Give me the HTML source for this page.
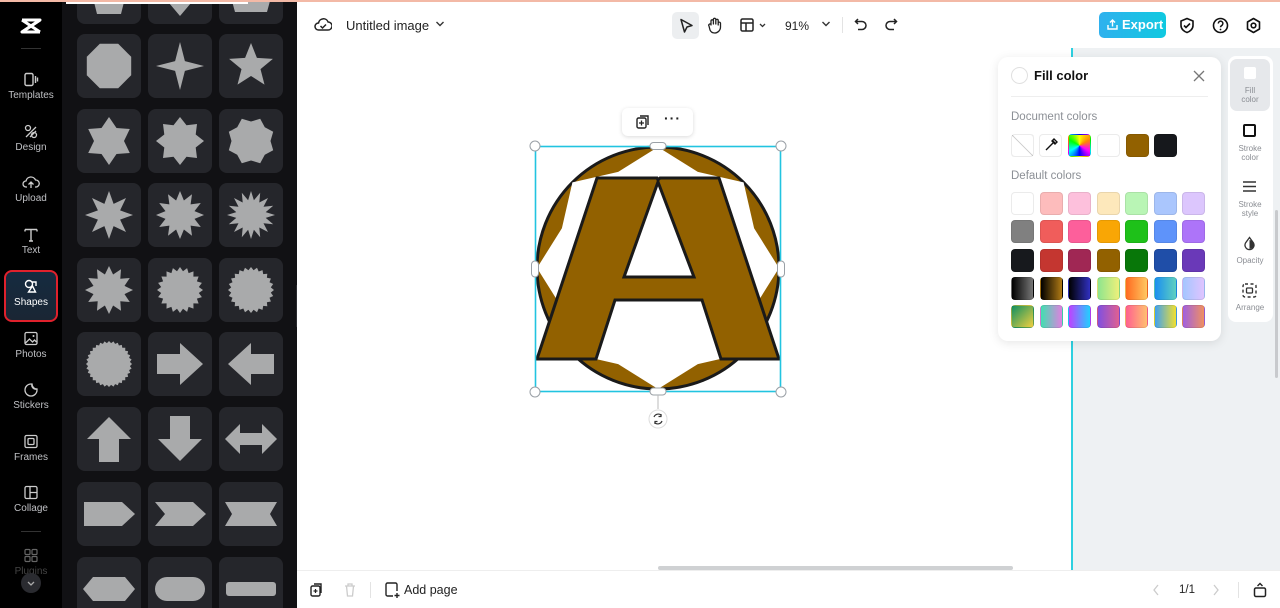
<!DOCTYPE html>
<html style="overflow:hidden;width:1280px;height:608px"><head><meta charset="utf-8">
<style>
*{box-sizing:border-box;margin:0;padding:0}
body{width:1280px;height:608px;overflow:hidden;font-family:"Liberation Sans",sans-serif;background:#fff;position:relative}
.abs{position:absolute}
#side{left:0;top:0;width:62px;height:608px;background:#000}
.si{position:absolute;left:0;width:62px;text-align:center;color:#bfc0c4;font-size:10px}
.si svg{display:block;margin:0 auto 3px}
#panel{left:62px;top:0;width:235px;height:608px;background:#111114;overflow:hidden}
.tile{position:absolute;width:64px;height:64px;background:#25262b;border-radius:8px}
.tile svg{width:64px;height:64px}
.sw{position:absolute;width:23px;height:23px;border-radius:4px;border:1px solid rgba(0,0,0,.08)}
.rt{position:absolute;left:0;width:44px;text-align:center;font-size:8px;color:#8a8d93;line-height:9px}
</style></head><body>

<div id="side" class="abs">
  <svg class="abs" style="left:19px;top:17px" width="24" height="18" viewBox="0 0 24 18"><path d="M3 3h18L3 15h18" fill="none" stroke="#fff" stroke-width="3" stroke-linejoin="round"/><path d="M3 3l18 12M21 3L3 15" stroke="#fff" stroke-width="3"/></svg>
  <div class="abs" style="left:21px;top:48px;width:20px;height:1px;background:#333"></div>
  <div class="si" style="top:72px"><svg width="16" height="15" viewBox="0 0 16 15"><rect x="2" y="1.5" width="8" height="12" rx="1.5" fill="none" stroke="#ccc" stroke-width="1.4"/><path d="M12.5 4v7M14.5 5.5v4" stroke="#ccc" stroke-width="1.4"/></svg>Templates</div>
  <div class="si" style="top:124px"><svg width="16" height="15" viewBox="0 0 16 15"><circle cx="5" cy="4" r="2.5" fill="none" stroke="#ccc" stroke-width="1.3"/><path d="M3 13l10-10M7 13l6-6" stroke="#ccc" stroke-width="1.3"/><circle cx="11" cy="11" r="2.5" fill="none" stroke="#ccc" stroke-width="1.3"/></svg>Design</div>
  <div class="si" style="top:175px"><svg width="18" height="15" viewBox="0 0 18 15"><path d="M5 12H4a3 3 0 010-6 5 5 0 019.5-1A3.5 3.5 0 0114 12h-1M9 13V7M6.5 9.5L9 7l2.5 2.5" fill="none" stroke="#ccc" stroke-width="1.3"/></svg>Upload</div>
  <div class="si" style="top:227px"><svg width="16" height="15" viewBox="0 0 16 15"><path d="M2 2.5h12M8 2.5V14M2 2.5v2M14 2.5v2M6 14h4" fill="none" stroke="#ccc" stroke-width="1.4"/></svg>Text</div>
  <div class="abs" style="left:4px;top:270px;width:54px;height:52px;border:2px solid #e0212c;border-radius:8px;background:linear-gradient(#152b40,#1a2634)"></div>
  <div class="si" style="top:279px;color:#fff"><svg width="16" height="15" viewBox="0 0 16 15"><circle cx="6" cy="5" r="3.5" fill="none" stroke="#fff" stroke-width="1.4"/><path d="M9 3h4v4M9.5 7l3 6h-7z" fill="none" stroke="#fff" stroke-width="1.4"/></svg>Shapes</div>
  <div class="si" style="top:331px"><svg width="16" height="15" viewBox="0 0 16 15"><rect x="2" y="1.5" width="12" height="12" rx="1.5" fill="none" stroke="#ccc" stroke-width="1.3"/><path d="M2.5 12l4-4 3 3 2-2 2 2" fill="none" stroke="#ccc" stroke-width="1.3"/><circle cx="10.5" cy="5" r="1" fill="#ccc"/></svg>Photos</div>
  <div class="si" style="top:382px"><svg width="16" height="15" viewBox="0 0 16 15"><path d="M14 8A6 6 0 118 2h1a5 5 0 005 5z" fill="none" stroke="#ccc" stroke-width="1.3"/><path d="M9 2a4 4 0 005 5" fill="none" stroke="#ccc" stroke-width="1.3"/></svg>Stickers</div>
  <div class="si" style="top:434px"><svg width="16" height="15" viewBox="0 0 16 15"><rect x="2" y="1.5" width="12" height="12" rx="1.5" fill="none" stroke="#ccc" stroke-width="1.3"/><rect x="5" y="4.5" width="6" height="6" rx="1" fill="none" stroke="#ccc" stroke-width="1.3"/></svg>Frames</div>
  <div class="si" style="top:485px"><svg width="16" height="15" viewBox="0 0 16 15"><rect x="2" y="1.5" width="12" height="12" rx="1.5" fill="none" stroke="#ccc" stroke-width="1.3"/><path d="M7 1.5v12M7 7.5h7" stroke="#ccc" stroke-width="1.3"/></svg>Collage</div>
  <div class="abs" style="left:21px;top:531px;width:20px;height:1px;background:#333"></div>
  <div class="si" style="top:548px;color:#444"><svg width="16" height="15" viewBox="0 0 16 15"><g fill="none" stroke="#666" stroke-width="1.2"><rect x="2" y="1.5" width="5" height="5" rx="1"/><rect x="9" y="1.5" width="5" height="5" rx="1"/><rect x="2" y="8.5" width="5" height="5" rx="1"/><rect x="9" y="8.5" width="5" height="5" rx="1"/></g></svg>Plugins</div>
  <div class="abs" style="left:21px;top:573px;width:20px;height:20px;border-radius:50%;background:#2a2b30"><svg width="20" height="20" viewBox="0 0 20 20"><path d="M7 9l3 3 3-3" fill="none" stroke="#aaa" stroke-width="1.3"/></svg></div>
</div>

<div id="panel" class="abs"><div id="tiles" class="abs" style="left:-62px;top:0;width:297px;height:608px"></div></div>
<div class="abs" style="left:66px;top:0;width:182px;height:4px;background:#fff"></div>
<div class="abs" style="left:296px;top:285px;width:6px;height:42px;background:#2a2b30;border-radius:0 6px 6px 0"></div>

<svg class="abs" style="left:314px;top:17px" width="18" height="16" viewBox="0 0 18 16"><path d="M5 13H4.5a3.5 3.5 0 010-7 5 5 0 019.6-1A3.6 3.6 0 0114 13z" fill="none" stroke="#222" stroke-width="1.5"/><path d="M6.5 9l2 2 3.5-3.5" fill="none" stroke="#222" stroke-width="1.5"/></svg>
<div class="abs" style="left:346px;top:18px;font-size:13px;color:#222">Untitled image</div>
<svg class="abs" style="left:435px;top:20px" width="10" height="8" viewBox="0 0 10 8"><path d="M1.5 2l3.5 3.5L8.5 2" fill="none" stroke="#333" stroke-width="1.4"/></svg>
<div class="abs" style="left:672px;top:12px;width:27px;height:27px;background:#eceef0;border-radius:5px"></div>
<svg class="abs" style="left:677px;top:17px" width="18" height="18" viewBox="0 0 18 18"><path d="M4 2.5l11 6-5 1.5-2.5 5z" fill="none" stroke="#222" stroke-width="1.5" stroke-linejoin="round"/></svg>
<svg class="abs" style="left:706px;top:16px" width="18" height="18" viewBox="0 0 18 18"><path d="M5 9V5a1.2 1.2 0 012.4 0v3V3.5a1.2 1.2 0 012.4 0V8V4.5a1.2 1.2 0 012.4 0V9v-2a1.2 1.2 0 012.3 0v4a6 6 0 01-6 6 5 5 0 01-4.5-3L3 10a1.2 1.2 0 012-1.5z" fill="none" stroke="#222" stroke-width="1.3" stroke-linejoin="round"/></svg>
<svg class="abs" style="left:739px;top:17px" width="30" height="16" viewBox="0 0 30 16"><rect x="2" y="2" width="12" height="12" rx="1.5" fill="none" stroke="#222" stroke-width="1.5"/><path d="M2 6h12M7 6v8" stroke="#222" stroke-width="1.5"/><path d="M21 7l2.5 2.5L26 7" fill="none" stroke="#333" stroke-width="1.3"/></svg>
<div class="abs" style="left:785px;top:19px;font-size:12px;color:#222">91%</div>
<svg class="abs" style="left:821px;top:20px" width="10" height="8" viewBox="0 0 10 8"><path d="M1.5 2l3.5 3.5L8.5 2" fill="none" stroke="#333" stroke-width="1.4"/></svg>
<div class="abs" style="left:842px;top:17px;width:1px;height:16px;background:#e3e3e3"></div>
<svg class="abs" style="left:853px;top:17px" width="16" height="16" viewBox="0 0 16 16"><path d="M5 2L2.5 4.5 5 7M2.5 4.5H9a4 4 0 010 8H5" fill="none" stroke="#222" stroke-width="1.5"/></svg>
<svg class="abs" style="left:883px;top:17px" width="16" height="16" viewBox="0 0 16 16"><path d="M11 2l2.5 2.5L11 7M13.5 4.5H7a4 4 0 000 8h4" fill="none" stroke="#222" stroke-width="1.5"/></svg>

<div class="abs" style="left:1099px;top:12px;width:67px;height:26px;border-radius:5px;background:linear-gradient(90deg,#2fb1ee,#10c9e0);color:#fff;font-size:13px;font-weight:bold;line-height:26px;padding-left:23px">Export</div>
<svg class="abs" style="left:1106px;top:18px" width="13" height="13" viewBox="0 0 13 13"><path d="M2 7v4h9V7M6.5 8.5V2M4 4.5L6.5 2 9 4.5" fill="none" stroke="#fff" stroke-width="1.4"/></svg>
<svg class="abs" style="left:1179px;top:17px" width="16" height="17" viewBox="0 0 16 17"><path d="M8 1.5l6 2.5v4.5c0 3.5-3 6-6 7-3-1-6-3.5-6-7V4z" fill="none" stroke="#111" stroke-width="1.6"/><path d="M5 8.5l2 2 4-4" fill="none" stroke="#111" stroke-width="1.6"/></svg>
<svg class="abs" style="left:1212px;top:17px" width="17" height="17" viewBox="0 0 17 17"><circle cx="8.5" cy="8.5" r="7" fill="none" stroke="#111" stroke-width="1.6"/><path d="M6.3 6.5a2.3 2.3 0 114 1.5c-1 .7-1.8 1.2-1.8 2.3" fill="none" stroke="#111" stroke-width="1.5"/><circle cx="8.5" cy="12.5" r=".9" fill="#111"/></svg>
<svg class="abs" style="left:1245px;top:17px" width="17" height="17" viewBox="0 0 17 17"><path d="M8.5 1.5l6 3.5v7l-6 3.5-6-3.5V5z" fill="none" stroke="#111" stroke-width="1.6" stroke-linejoin="round"/><circle cx="8.5" cy="8.5" r="2.3" fill="none" stroke="#111" stroke-width="1.6"/></svg>

<div class="abs" style="left:297px;top:48px;width:774px;height:522px;background:#fff"></div>
<div class="abs" style="left:1071px;top:48px;width:2px;height:522px;background:#2ed0e0"></div>
<div class="abs" style="left:1073px;top:48px;width:207px;height:522px;background:#eef1f3"></div>
<div class="abs" style="left:1275px;top:210px;width:3px;height:168px;background:#c8cacd;border-radius:2px"></div>
<div class="abs" style="left:658px;top:566px;width:355px;height:4px;background:#cfd1d3;border-radius:2px"></div>

<svg class="abs" style="left:0;top:0" width="1280" height="608" viewBox="0 0 1280 608">
  <circle cx="658" cy="268" r="121" fill="#926100" stroke="#1a1a1a" stroke-width="3"/>
  <polygon id="wstar" fill="#fff"/>
  <path d="M537 359L597 178H657L658 180L660 178H719L779 359H721L702 300H615L596 359Z M624 277H694L658 182Z" fill="#926100" fill-rule="evenodd" stroke="#1a1a1a" stroke-width="3" stroke-linejoin="miter"/>
  <rect x="535.5" y="146.5" width="245" height="245" fill="none" stroke="#22c4e0" stroke-width="1.6"/>
  <g fill="#fff" stroke="#9aa0a6" stroke-width="1">
    <circle cx="535" cy="146" r="5"/><circle cx="781" cy="146" r="5"/><circle cx="535" cy="392" r="5"/><circle cx="781" cy="392" r="5"/>
    <rect x="650" y="142.5" width="16" height="7" rx="3.5"/><rect x="650" y="388" width="16" height="7" rx="3.5"/>
    <rect x="531.5" y="261" width="7" height="16" rx="3.5"/><rect x="777.5" y="261" width="7" height="16" rx="3.5"/>
  </g>
  <line x1="658" y1="395" x2="658" y2="409" stroke="#bbb"/>
  <circle cx="658" cy="419" r="9" fill="#fff" stroke="#ddd"/>
  <path d="M654 417a4.5 4.5 0 017.5-1.5M662 421a4.5 4.5 0 01-7.5 1.5M661 414v2.5h-2.5M655 424v-2.5h2.5" fill="none" stroke="#333" stroke-width="1.2"/>
</svg>
<div class="abs" style="left:622px;top:108px;width:71px;height:28px;background:#fff;border-radius:6px;box-shadow:0 1px 4px rgba(0,0,0,.15)"></div>
<svg class="abs" style="left:635px;top:114px" width="16" height="16" viewBox="0 0 16 16"><rect x="2" y="4" width="9" height="10" rx="1.5" fill="none" stroke="#222" stroke-width="1.4"/><path d="M5 2h8v9" fill="none" stroke="#222" stroke-width="1.4"/><path d="M6.5 6.5v5M4 9h5" stroke="#222" stroke-width="1.3"/></svg>
<div class="abs" style="left:664px;top:110px;font-size:14px;font-weight:bold;color:#222;letter-spacing:1px">···</div>

<div class="abs" style="left:998px;top:57px;width:223px;height:284px;background:#fff;border-radius:10px;box-shadow:0 2px 10px rgba(0,0,0,.1)"></div>
<div class="abs" style="left:1011px;top:67px;width:17px;height:17px;border-radius:50%;border:1px solid #e0e0e0"></div>
<div class="abs" style="left:1034px;top:68px;font-size:13px;font-weight:bold;color:#111">Fill color</div>
<svg class="abs" style="left:1192px;top:69px" width="14" height="14" viewBox="0 0 14 14"><path d="M2 2l10 10M12 2L2 12" stroke="#777" stroke-width="1.3"/></svg>
<div class="abs" style="left:1011px;top:96px;width:197px;height:1px;background:#eee"></div>
<div class="abs" style="left:1011px;top:111px;font-size:11.5px;color:#8c9096">Document colors</div>
<div class="sw" style="left:1011px;top:134px;background:linear-gradient(45deg,#fff 48%,#ccc 49%,#ccc 51%,#fff 52%)"></div>
<div class="sw" style="left:1039px;top:134px;background:#fff"><svg width="21" height="21" viewBox="0 0 21 21"><path d="M6 15l7-7M12 5l4 4M14 4l3 3-2 2-3-3z" fill="none" stroke="#111" stroke-width="1.4"/></svg></div>
<div class="sw" style="left:1068px;top:134px;background:conic-gradient(#ff0 0deg,#f80,#f0f,#00f,#0ff,#0f0,#ff0)"></div>
<div class="sw" style="left:1097px;top:134px;background:#fff"></div>
<div class="sw" style="left:1126px;top:134px;background:#926100"></div>
<div class="sw" style="left:1154px;top:134px;background:#16181c"></div>
<div class="abs" style="left:1011px;top:170px;font-size:11.5px;color:#8c9096">Default colors</div>
<div id="def"></div>

<div class="abs" style="left:1228px;top:56px;width:45px;height:266px;background:#fff;border-radius:8px"></div>
<div class="abs" style="left:1230px;top:59px;width:40px;height:52px;background:#e6e8eb;border-radius:7px"></div>
<div class="abs" style="left:1244px;top:67px;width:12px;height:12px;background:#fff;border-radius:2px"></div>
<div class="rt" style="left:1228px;top:86px">Fill<br>color</div>
<div class="abs" style="left:1243px;top:124px;width:13px;height:13px;border:2.5px solid #111;border-radius:2px"></div>
<div class="rt" style="left:1228px;top:144px">Stroke<br>color</div>
<svg class="abs" style="left:1242px;top:180px" width="15" height="13" viewBox="0 0 15 13"><path d="M1 2h13M1 6.5h13M1 11h13" stroke="#333" stroke-width="1.6"/></svg>
<div class="rt" style="left:1228px;top:200px">Stroke<br>style</div>
<svg class="abs" style="left:1243px;top:236px" width="13" height="15" viewBox="0 0 13 15"><path d="M6.5 1.5L2.5 7a4.5 4.5 0 108 0z" fill="none" stroke="#333" stroke-width="1.3"/><path d="M6.5 4v9a4 4 0 000-9" fill="#333"/></svg>
<div class="rt" style="left:1228px;top:256px">Opacity</div>
<svg class="abs" style="left:1242px;top:283px" width="15" height="15" viewBox="0 0 15 15"><rect x="1" y="1" width="13" height="13" rx="2" fill="none" stroke="#333" stroke-width="1.4" stroke-dasharray="3 2.5"/><rect x="4.5" y="5" width="6" height="5" rx="1" fill="none" stroke="#333" stroke-width="1.3"/></svg>
<div class="rt" style="left:1228px;top:303px">Arrange</div>

<div class="abs" style="left:297px;top:570px;width:983px;height:38px;background:#fff;border-top:1px solid #eee"></div>
<svg class="abs" style="left:309px;top:582px" width="15" height="16" viewBox="0 0 15 16"><rect x="2" y="4" width="9" height="10" rx="1.5" fill="none" stroke="#222" stroke-width="1.4"/><path d="M5 2h7v9" fill="none" stroke="#222" stroke-width="1.4"/><path d="M6.5 7v4M4.5 9h4" stroke="#222" stroke-width="1.2"/></svg>
<svg class="abs" style="left:343px;top:582px" width="14" height="16" viewBox="0 0 14 16"><path d="M2 4h10M5 4V2h4v2M3.5 4l1 10h5l1-10" fill="none" stroke="#ccc" stroke-width="1.3"/></svg>
<div class="abs" style="left:370px;top:582px;width:1px;height:16px;background:#e3e3e3"></div>
<svg class="abs" style="left:384px;top:582px" width="16" height="17" viewBox="0 0 16 17"><path d="M9 14H3.5a1.5 1.5 0 01-1.5-1.5v-10A1.5 1.5 0 013.5 1h8A1.5 1.5 0 0113 2.5V9" fill="none" stroke="#222" stroke-width="1.4"/><path d="M13 11v5M10.5 13.5h5" stroke="#222" stroke-width="1.4"/></svg>
<div class="abs" style="left:404px;top:583px;font-size:12.5px;color:#222">Add page</div>
<svg class="abs" style="left:1151px;top:583px" width="10" height="14" viewBox="0 0 10 14"><path d="M7 2L3 7l4 5" fill="none" stroke="#ccc" stroke-width="1.3"/></svg>
<div class="abs" style="left:1179px;top:584px;font-size:11.5px;color:#222">1/1</div>
<svg class="abs" style="left:1211px;top:583px" width="10" height="14" viewBox="0 0 10 14"><path d="M3 2l4 5-4 5" fill="none" stroke="#ccc" stroke-width="1.3"/></svg>
<div class="abs" style="left:1238px;top:582px;width:1px;height:16px;background:#e3e3e3"></div>
<svg class="abs" style="left:1253px;top:581px" width="14" height="17" viewBox="0 0 14 17"><rect x="1.5" y="7" width="11" height="8.5" rx="1.5" fill="none" stroke="#222" stroke-width="1.5"/><path d="M4.5 5L7 2.5 9.5 5" fill="none" stroke="#222" stroke-width="1.4"/></svg>
<div class="abs" style="left:0;top:0;width:1280px;height:2px;background:#f3b9a6"></div>

<script>
function star(cx,cy,n,R,r,rot){rot=rot||0;var p=[];for(var i=0;i<2*n;i++){var a=rot-Math.PI/2+i*Math.PI/n;var rr=i%2?r:R;p.push((cx+rr*Math.cos(a)).toFixed(1)+','+(cy+rr*Math.sin(a)).toFixed(1));}return p.join(' ');}
document.getElementById('wstar').setAttribute('points',star(658,268,8,121,104));
var F='#a9aaab';
function poly(pts){return '<polygon fill="'+F+'" points="'+pts+'"/>';}
var shapes=[
 [poly('14,30 50,30 44,54 20,54'),poly('10,30 54,30 32,56'),poly('10,30 54,30 48,52 16,52')],
 [poly(star(32,32,8,24,22.2,Math.PI/8)),poly(star(32,32,4,24,7)),poly(star(32,32,5,23,10,0))],
 [poly(star(32,32,6,24,15)),poly(star(32,32,8,24,17)),poly(star(32,32,8,24,19.5,Math.PI/8))],
 [poly(star(32,32,8,24,12)),poly(star(32,32,12,24,15)),poly(star(32,32,16,24,15))],
 [poly(star(32,32,12,24,16)),poly(star(32,32,20,23,19)),poly(star(32,32,24,23,20))],
 [poly(star(32,32,32,23,21)),poly('9,22 32,22 32,11 55,32 32,53 32,42 9,42'),poly('55,22 32,22 32,11 9,32 32,53 32,42 55,42')],
 [poly('22,55 22,32 10,32 32,10 54,32 42,32 42,55'),poly('22,9 42,9 42,32 54,32 32,54 10,32 22,32'),poly('6,32 21,17 21,26 43,26 43,17 58,32 43,47 43,38 21,38 21,47')],
 [poly('7,20 45,20 58,32 45,44 7,44'),poly('7,20 45,20 58,32 45,44 7,44 17,32'),poly('6,20 58,20 51,32 58,44 6,44 13,32')],
 [poly('6,32 16,20 48,20 58,32 48,44 16,44'),'<rect x="7" y="20" width="50" height="24" rx="12" fill="'+F+'"/>','<rect x="7" y="25" width="50" height="14" rx="3" fill="'+F+'"/>']
];
var tops=[-40,34,109,183,258,332,407,482,557],xs=[77,148,219],h='';
for(var r=0;r<9;r++)for(var c=0;c<3;c++){h+='<div class="tile" style="left:'+xs[c]+'px;top:'+tops[r]+'px"><svg viewBox="0 0 64 64" overflow="visible">'+shapes[r][c]+'</svg></div>';}
document.getElementById('tiles').innerHTML=h;
var cols=[
['#fff','#fdbcbc','#fdc0dc','#fde8bb','#b9f5b5','#aac6fd','#dcc6fd'],
['#808080','#f05d5b','#fd5f9b','#f9a605','#1ec119','#5e93fa','#ad74f9'],
['#17191d','#c43630','#a02754','#926100','#087709','#1f4ea8','#6a39b8'],
['linear-gradient(90deg,#000,#777)','linear-gradient(90deg,#000,#b07a15)','linear-gradient(90deg,#000,#3030c0)','linear-gradient(90deg,#8ee58e,#eef07a)','linear-gradient(90deg,#ff6a20,#ffc860)','linear-gradient(90deg,#1a8ff0,#5fd0c0)','linear-gradient(90deg,#a4c6ff,#e0c4ff)'],
['linear-gradient(135deg,#109060,#f0d040)','linear-gradient(90deg,#40e0b0,#e080e0)','linear-gradient(90deg,#c040ff,#20d0ff)','linear-gradient(90deg,#8050e0,#e06090)','linear-gradient(90deg,#ff6090,#ffc070)','linear-gradient(90deg,#40a0f0,#f0e030)','linear-gradient(90deg,#a060e0,#f09060)']];
var d='';for(var i=0;i<5;i++)for(var j=0;j<7;j++)d+='<div class="sw" style="left:'+(1011+j*28.5)+'px;top:'+(192+i*28.3)+'px;background:'+cols[i][j]+'"></div>';
document.getElementById('def').innerHTML=d;
</script>
</body></html>
